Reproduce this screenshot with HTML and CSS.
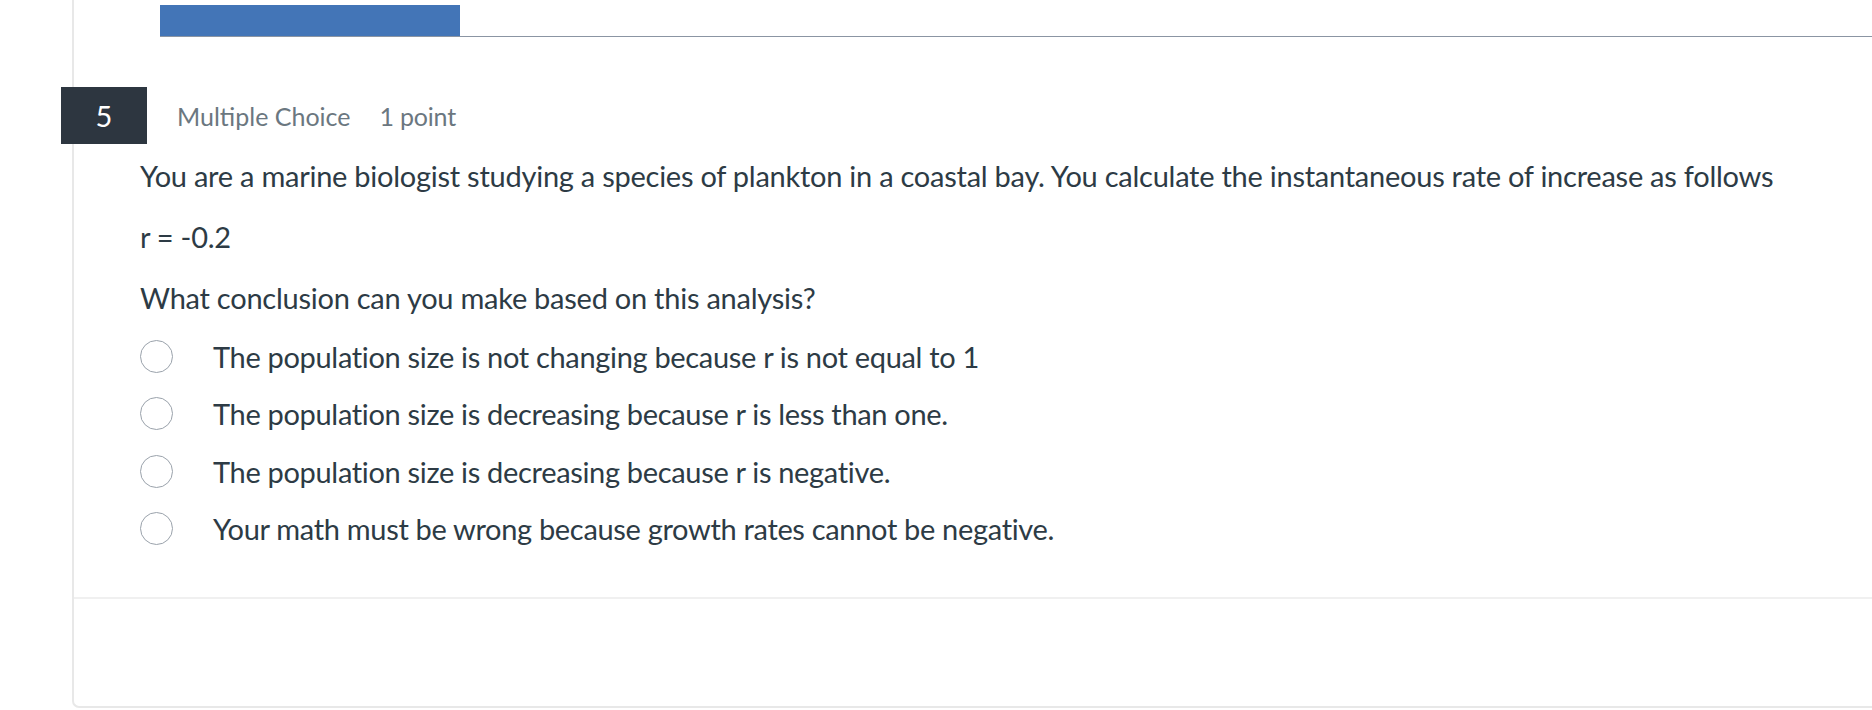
FILE: index.html
```html
<!DOCTYPE html>
<html>
<head>
<meta charset="utf-8">
<link rel="stylesheet" href="styles.css">
</head>
<body>
<div class="card">
  <div class="progress">
    <div class="progress-track">
      <div class="progress-fill"></div>
    </div>
  </div>
  <div class="q-header">
    <div class="q-num">5</div>
    <span class="q-type">Multiple Choice</span>
    <span class="q-points">1 point</span>
  </div>
  <div class="q-body">
    <p class="q-text">You are a marine biologist studying a species of plankton in a coastal bay. You calculate the instantaneous rate of increase as follows</p>
    <p class="q-text">r = -0.2</p>
    <p class="q-text">What conclusion can you make based on this analysis?</p>
    <ul class="answers">
      <li class="answer"><span class="radio"></span><span class="answer-text">The population size is not changing because r is not equal to 1</span></li>
      <li class="answer"><span class="radio"></span><span class="answer-text">The population size is decreasing because r is less than one.</span></li>
      <li class="answer"><span class="radio"></span><span class="answer-text">The population size is decreasing because r is negative.</span></li>
      <li class="answer"><span class="radio"></span><span class="answer-text">Your math must be wrong because growth rates cannot be negative.</span></li>
    </ul>
  </div>
  <div class="separator"></div>
</div>
</body>
</html>
```

FILE: styles.css
```css
html, body {
  margin: 0;
  padding: 0;
  background: #ffffff;
  overflow: hidden;
}
body {
  font-family: Lato, "Noto Sans", sans-serif;
  color: #2d3b45;
}
.card {
  margin-left: 72px;
  margin-right: -20px;
  height: 706px;
  border-left: 2px solid #e8e8e8;
  border-bottom: 2px solid #e8e8e8;
  border-bottom-left-radius: 7px;
}
.progress {
  padding-top: 5px;
  padding-left: 86px;
}
.progress-track {
  border-bottom: 1px solid #8b95a3;
  height: 31px;
}
.progress-fill {
  width: 300px;
  height: 31px;
  background: #4375b7;
}
.q-header {
  display: flex;
  align-items: center;
  margin-top: 50px;
  margin-left: -13px;
  height: 57px;
}
.q-num {
  width: 86px;
  height: 57px;
  background: #2d3640;
  color: #ffffff;
  font-size: 29px;
  display: flex;
  align-items: center;
  justify-content: center;
}
.q-type {
  margin-left: 30px;
  font-size: 25px;
  color: #6b7780;
}
.q-points {
  margin-left: 29px;
  font-size: 25px;
  color: #6b7780;
  letter-spacing: -0.2px;
}
.q-body {
  padding-left: 66px;
  margin-top: 1px;
}
.q-text {
  margin: 0;
  font-size: 29px;
  line-height: 61px;
  letter-spacing: -0.25px;
}
.answers {
  list-style: none;
  margin: 0;
  padding: 0;
}
.answer {
  display: flex;
  align-items: center;
  height: 57.3px;
  font-size: 29px;
  letter-spacing: -0.32px;
}
.radio {
  width: 31px;
  height: 31px;
  border: 1px solid #9aa2ab;
  border-radius: 50%;
  flex: none;
}
.answer-text {
  margin-left: 40px;
}
.separator {
  margin-top: 40px;
  border-top: 2px solid #f0f0f0;
}
```
